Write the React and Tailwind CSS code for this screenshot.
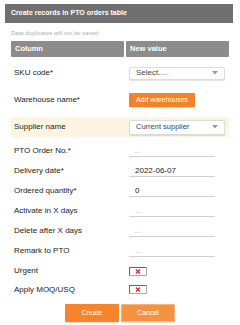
import React from "react";

function Caret() {
  return (
    <svg width="6" height="4" viewBox="0 0 6 4" className="shrink-0">
      <path d="M0 0 L6 0 L3 3.5 Z" fill="#9a9a9a" />
    </svg>
  );
}

function SelectBox({ text, h, size }) {
  return (
    <div
      className={`w-[96px] ${h} ${size} flex items-center justify-between pl-[6px] pr-[6px] bg-white border border-[#dcdcdc] rounded-[2px] shadow-[0_1px_1px_rgba(0,0,0,0.12)] text-[#444]`}
    >
      <span>{text}</span>
      <Caret />
    </div>
  );
}

function TextInput({ value }) {
  return (
    <div className="w-[86px] h-[11px] leading-[10px] pl-[6px] border-b border-[#cfcfcf]">
      {value ? (
        <span className="text-[#222]">{value}</span>
      ) : (
        <span className="text-[#b5b5b5] text-[7px]">...</span>
      )}
    </div>
  );
}

function Check() {
  return (
    <div className="w-[18px] h-[9px] flex items-center justify-center border border-[#666] border-r-[#aaa] border-b-[#aaa] rounded-[1px] bg-white">
      <svg width="6" height="5" viewBox="0 0 6 5">
        <path d="M1 0.5 L5 4.5 M5 0.5 L1 4.5" stroke="#e0282f" strokeWidth="1.3" />
      </svg>
    </div>
  );
}

function Row({ label, children, h = "h-[20px]", extra = "" }) {
  return (
    <div className={`grid grid-cols-[115px_1fr] items-center ${h} ${extra}`}>
      <div className="pl-[3px] text-[#222]">{label}</div>
      <div className="pl-[3px] flex items-center">{children}</div>
    </div>
  );
}

export default function App() {
  return (
    <div className="w-[240px] h-[325px] bg-white text-[8px] font-['Liberation_Sans',Arial,sans-serif] pt-[4px]">
      <div className="mx-[5px] w-[228px] h-[19px] bg-[#707070] flex items-center pl-[6px] text-white font-bold text-[7px]">
        Create records in PTO orders table
      </div>
      <div className="mx-[11px] mt-[6px] text-[6px] text-[#b0b0b0] leading-[8px]">
        Data duplicates will not be saved
      </div>
      <div className="mx-[11px] mt-[4px] w-[218px]">
        <div className="grid grid-cols-[113px_1fr] gap-[2px] h-[16px] text-white font-bold text-[7.5px]">
          <div className="bg-[#8c8c8c] rounded-[1px] flex items-center pl-[4px]">Column</div>
          <div className="bg-[#8c8c8c] rounded-[1px] flex items-center pl-[4px]">New value</div>
        </div>
        <Row label="SKU code*" h="h-[24px]" extra="mt-[4px]">
          <SelectBox text="Select...." h="h-[13px]" size="text-[8px]" />
        </Row>
        <Row label="Warehouse name*" h="h-[24px]" extra="mt-[3px]">
          <div className="w-[66px] h-[14px] bg-[#f48226] text-white text-[7px] flex items-center justify-center rounded-[1px] shadow-[0_1px_1px_rgba(0,0,0,0.15)]">
            Add warehouses
          </div>
        </Row>
        <Row label="Supplier name" extra="mt-[5px] bg-[#fdf5e1]">
          <SelectBox text="Current supplier" h="h-[15px]" size="text-[7.5px]" />
        </Row>
        <Row label="PTO Order No.*" extra="mt-[4px]">
          <TextInput />
        </Row>
        <Row label="Delivery date*">
          <TextInput value="2022-06-07" />
        </Row>
        <Row label="Ordered quantity*">
          <TextInput value="0" />
        </Row>
        <Row label="Activate in X days">
          <TextInput />
        </Row>
        <Row label="Delete after X days">
          <TextInput />
        </Row>
        <Row label="Remark to PTO">
          <TextInput />
        </Row>
        <Row label="Urgent">
          <Check />
        </Row>
        <Row label="Apply MOQ/USQ" h="h-[17px]">
          <Check />
        </Row>
      </div>
      <div className="flex justify-center gap-[2px] mt-[6px] text-[7px]">
        <div className="w-[54px] h-[18px] bg-[#f5842b] text-white flex items-center justify-center rounded-[1px] shadow-[0_1px_1px_rgba(0,0,0,0.15)]">
          Create
        </div>
        <div className="w-[54px] h-[18px] bg-[#f5923f] text-white flex items-center justify-center rounded-[1px] border border-[#f8b579] shadow-[0_1px_1px_rgba(0,0,0,0.15)]">
          Cancel
        </div>
      </div>
    </div>
  );
}
